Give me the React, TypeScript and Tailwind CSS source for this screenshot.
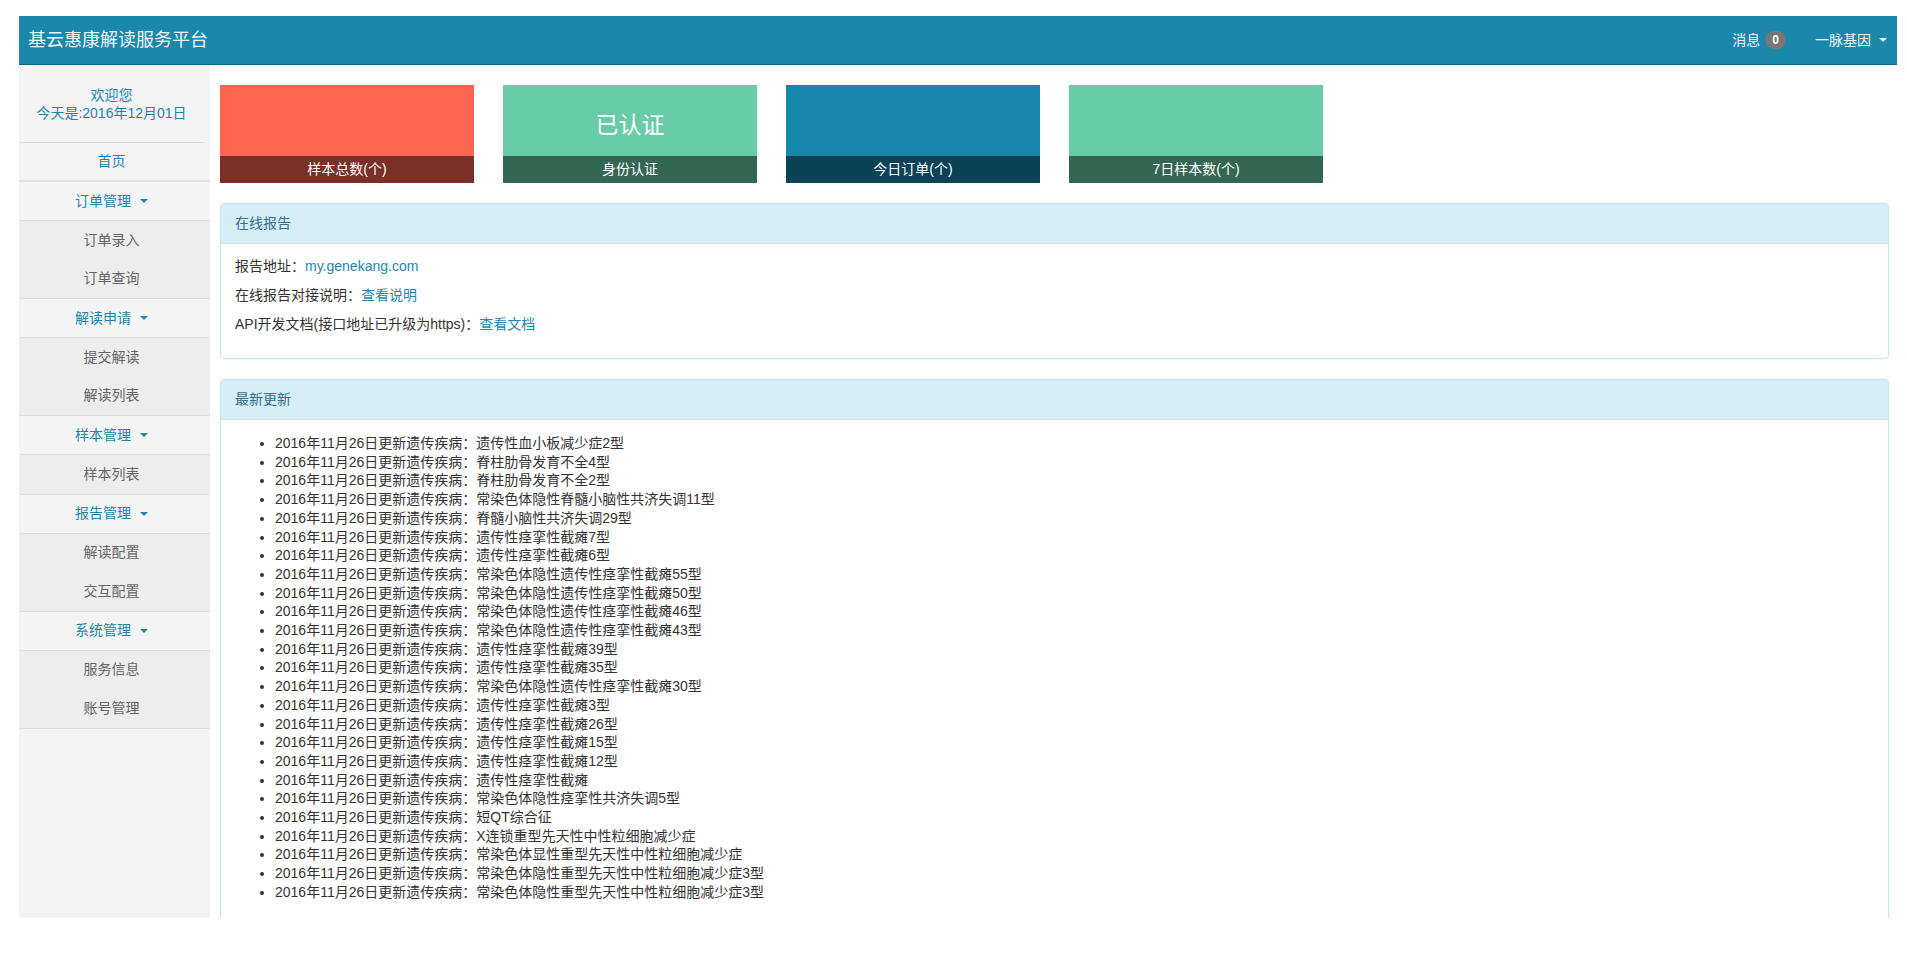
import React from 'react';

const font = "font-['Liberation_Sans','Noto_Sans_CJK_SC',sans-serif]";

const menu = [
  { title: '订单管理', items: ['订单录入', '订单查询'] },
  { title: '解读申请', items: ['提交解读', '解读列表'] },
  { title: '样本管理', items: ['样本列表'] },
  { title: '报告管理', items: ['解读配置', '交互配置'] },
  { title: '系统管理', items: ['服务信息', '账号管理'] },
];

const cards = [
  { label: '样本总数(个)', value: '', top: 'bg-[#fc6650]', bottom: 'bg-[#7a3026]' },
  { label: '身份认证', value: '已认证', top: 'bg-[#68cca9]', bottom: 'bg-[#346654]' },
  { label: '今日订单(个)', value: '', top: 'bg-[#1885ab]', bottom: 'bg-[#0b4256]' },
  { label: '7日样本数(个)', value: '', top: 'bg-[#68cca9]', bottom: 'bg-[#346654]' },
];

const updates = [
  '遗传性血小板减少症2型',
  '脊柱肋骨发育不全4型',
  '脊柱肋骨发育不全2型',
  '常染色体隐性脊髓小脑性共济失调11型',
  '脊髓小脑性共济失调29型',
  '遗传性痉挛性截瘫7型',
  '遗传性痉挛性截瘫6型',
  '常染色体隐性遗传性痉挛性截瘫55型',
  '常染色体隐性遗传性痉挛性截瘫50型',
  '常染色体隐性遗传性痉挛性截瘫46型',
  '常染色体隐性遗传性痉挛性截瘫43型',
  '遗传性痉挛性截瘫39型',
  '遗传性痉挛性截瘫35型',
  '常染色体隐性遗传性痉挛性截瘫30型',
  '遗传性痉挛性截瘫3型',
  '遗传性痉挛性截瘫26型',
  '遗传性痉挛性截瘫15型',
  '遗传性痉挛性截瘫12型',
  '遗传性痉挛性截瘫',
  '常染色体隐性痉挛性共济失调5型',
  '短QT综合征',
  'X连锁重型先天性中性粒细胞减少症',
  '常染色体显性重型先天性中性粒细胞减少症',
  '常染色体隐性重型先天性中性粒细胞减少症3型',
  '常染色体隐性重型先天性中性粒细胞减少症3型',
];

function Caret({ color }: { color: string }) {
  return <span className={`inline-block h-0 w-0 border-x-4 border-t-4 border-x-transparent ${color}`} />;
}

function Navbar() {
  return (
    <nav className="flex h-[49px] items-center justify-between border-b border-[#0e6384] bg-[#1a87ab] text-[#eef6f9]">
      <span className="pl-[9px] text-[18px] leading-none">基云惠康解读服务平台</span>
      <div className="flex items-center pr-[10px] text-[14px]">
        <span>消息</span>
        <span className="ml-[5px] rounded-full bg-[#777777] px-[7px] py-[3px] text-[12px] font-bold leading-none text-white">0</span>
        <span className="ml-[29px]">一脉基因</span>
        <span className="ml-[8px] flex">
          <Caret color="border-t-[#eef6f9]" />
        </span>
      </div>
    </nav>
  );
}

function Sidebar() {
  return (
    <aside className="w-[191px] shrink-0 bg-[#f4f4f4] pr-[6px] text-[14px]">
      <div className="flex h-[78px] flex-col items-center justify-center border-b border-[#dddddd] leading-[18px] text-[#1a87ab]">
        <span>欢迎您</span>
        <span>今天是:2016年12月01日</span>
      </div>
      <div className="-mr-[6px] flex h-[39px] items-center justify-center border-b-2 border-[#e2e2e2] pr-[6px] text-[#1a87ab]">
        首页
      </div>
      {menu.map((group) => (
        <div key={group.title} className="-mr-[6px]">
          <div className="flex h-[39px] items-center justify-center gap-[9px] border-b border-[#dddddd] pr-[6px] text-[#1a87ab]">
            <span>{group.title}</span>
            <Caret color="border-t-[#1a87ab]" />
          </div>
          <div className="border-b border-[#dddddd] bg-[#ededed]">
            {group.items.map((item) => (
              <div key={item} className="flex h-[38.5px] items-center justify-center pr-[6px] text-[#666666]">
                {item}
              </div>
            ))}
          </div>
        </div>
      ))}
    </aside>
  );
}

function Panel({ title, children }: { title: string; children: React.ReactNode }) {
  return (
    <section className="mb-[20px] rounded-[4px] border border-[#bce8f1] bg-white">
      <div className="flex h-[40px] items-center rounded-t-[3px] border-b border-[#bce8f1] bg-[#d9edf7] px-[14px] text-[14px] text-[#31708f]">
        {title}
      </div>
      <div className="px-[14px] pb-[14px] pt-[12px] text-[14px] text-[#333333]">{children}</div>
    </section>
  );
}

export default function App() {
  return (
    <div className={`min-h-screen bg-white pl-[19px] pr-[10px] pt-[16px] ${font}`}>
      <Navbar />
      <div className="flex h-[853px] overflow-hidden">
        <Sidebar />
        <main className="flex-1 pl-[10px] pr-[8px] pt-[20px]">
          <div className="mb-[20px] flex gap-[29px]">
            {cards.map((card) => (
              <div key={card.label} className="w-[254px]">
                <div className={`flex h-[71px] items-center justify-center pt-[10px] text-[23px] text-white ${card.top}`}>
                  {card.value}
                </div>
                <div className={`flex h-[27px] items-center justify-center text-[14px] text-white ${card.bottom}`}>
                  {card.label}
                </div>
              </div>
            ))}
          </div>

          <Panel title="在线报告">
            <p className="mb-[9px] leading-[20px]">
              报告地址：<a className="text-[#1f87b1]">my.genekang.com</a>
            </p>
            <p className="mb-[9px] leading-[20px]">
              在线报告对接说明：<a className="text-[#1f87b1]">查看说明</a>
            </p>
            <p className="mb-[10px] leading-[20px]">
              API开发文档(接口地址已升级为https)：<a className="text-[#1f87b1]">查看文档</a>
            </p>
          </Panel>

          <Panel title="最新更新">
            <ul className="mb-[12px] list-disc pl-[40px] pt-[2px] leading-[18.7px]">
              {updates.map((item, i) => (
                <li key={i}>2016年11月26日更新遗传疾病：{item}</li>
              ))}
            </ul>
          </Panel>
        </main>
      </div>
    </div>
  );
}
